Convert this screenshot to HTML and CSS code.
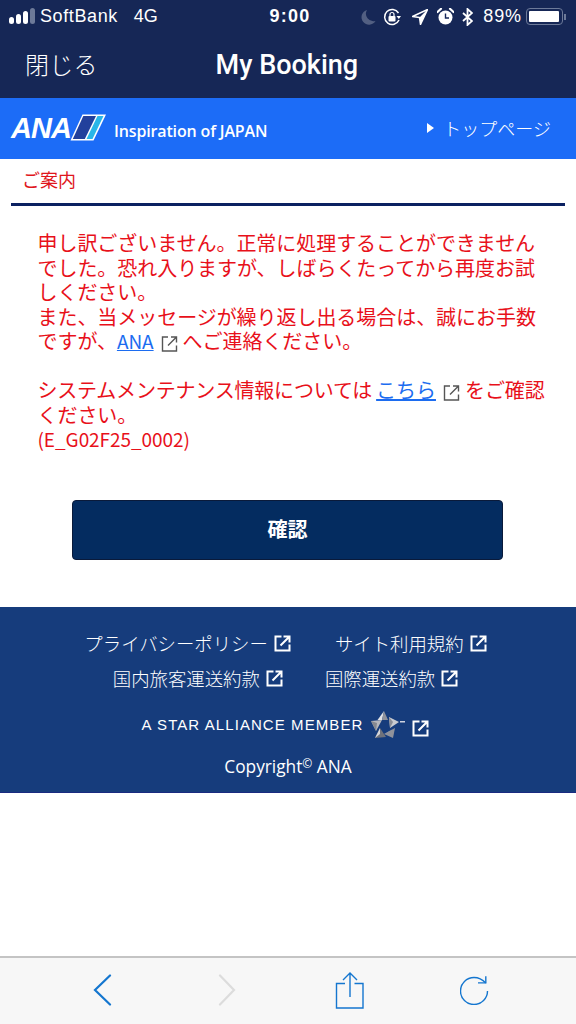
FILE: index.html
```html
<!DOCTYPE html>
<html lang="ja">
<head>
<meta charset="utf-8">
<title>My Booking</title>
<link rel="stylesheet" href="styles.css">
</head>
<body>
<div class="page">
  <header class="topbar">
    <div class="status">
      <div class="status-left">
        <svg class="signal" width="27" height="17" viewBox="0 0 27 17"><rect x="0" y="9" width="5" height="7" rx="2.5" fill="#fff"/><rect x="7" y="6" width="5" height="10" rx="2.5" fill="#fff"/><rect x="14" y="3" width="5" height="13" rx="2.5" fill="#fff"/><rect x="21" y="0" width="5" height="16" rx="2.5" fill="#6d7a99"/></svg>
        <span class="carrier">SoftBank</span><span class="net">4G</span>
      </div>
      <div class="clock">9:00</div>
      <div class="status-right">
        <svg class="st-moon" width="15" height="16" viewBox="0 0 15 16"><path d="M6 1a7.500 7.500 0 1 0 8.500 11A7.500 7.500 0 0 1 6 1z" fill="#525f82"/></svg>
        <svg class="st-lock" width="19" height="18" viewBox="0 0 19 18"><path d="M15.500 5A7.500 7.500 0 1 0 16 12" fill="none" stroke="#fff" stroke-width="1.500"/><path d="M13.500 8l4.500 0-2.200 3z" fill="#fff"/><rect x="5.500" y="8" width="7" height="5.500" rx="1" fill="#fff"/><path d="M7 8V6.500a2 2 0 0 1 4 0V8" fill="none" stroke="#fff" stroke-width="1.200"/></svg>
        <svg class="st-loc" width="16" height="16" viewBox="0 0 16 16"><path d="M15.500 .5L.5 7.500l7 1 1 7z" fill="none" stroke="#fff" stroke-width="1.500" stroke-linejoin="round"/><path d="M15.500 .5L7.500 8.500l1 7z" fill="#fff"/></svg>
        <svg class="st-alarm" width="17" height="17" viewBox="0 0 17 17"><circle cx="8.500" cy="9.500" r="7" fill="#fff"/><path d="M8.500 5.500v4.500h3.500" fill="none" stroke="#16275a" stroke-width="1.400"/><path d="M.5 4L4 .8M16.500 4L13 .8" stroke="#fff" stroke-width="2.200" stroke-linecap="round"/></svg>
        <svg class="st-bt" width="11" height="18" viewBox="0 0 11 18"><path d="M1 5l9 8-4.500 4V1L10 5l-9 8" fill="none" stroke="#fff" stroke-width="1.800"/></svg>
        <span class="pct">89%</span>
        <span class="battery"><span class="battery-fill"></span></span>
        <span class="battery-tip"></span>
      </div>
    </div>
    <div class="navrow">
      <span class="close">閉じる</span>
      <span class="title">My Booking</span>
    </div>
  </header>

  <div class="brand">
    <div class="brand-left">
      <span class="ana-logo">ANA</span>
      <svg class="ana-mark" width="37" height="27" viewBox="0 0 37 27"><path d="M12.500 .5h23.500L23.500 26.500H.5z" fill="#fff"/><path d="M13.300 2h12.700L14.800 25H2.800z" fill="#22409c"/><path d="M27.500 2h6L22.500 25h-6z" fill="#29b6e8"/></svg>
      <span class="tagline">Inspiration of JAPAN</span>
    </div>
    <a class="toplink"><span class="tri"></span>トップページ</a>
  </div>

  <main>
    <h2 class="heading">ご案内</h2>
    <div class="message">
      <p>申し訳ございません。正常に処理することができません<br>でした。恐れ入りますが、しばらくたってから再度お試<br>しください。<br>また、当メッセージが繰り返し出る場合は、誠にお手数<br>ですが、<a class="link latin">ANA</a><svg class="ext-gray" width="17" height="17" viewBox="0 0 17 17"><path d="M7 2H1.500v14h14v-5.500" fill="none" stroke="#555" stroke-width="1.400"/><path d="M7 10.500L15 2.500M10 2h5.500v5.500" fill="none" stroke="#555" stroke-width="1.400"/></svg>へご連絡ください。</p>
      <p><span class="tight">システムメンテナンス情報については</span><a class="link link-after">こちら</a><svg class="ext-gray" width="17" height="17" viewBox="0 0 17 17"><path d="M7 2H1.500v14h14v-5.500" fill="none" stroke="#555" stroke-width="1.400"/><path d="M7 10.500L15 2.500M10 2h5.500v5.500" fill="none" stroke="#555" stroke-width="1.400"/></svg>をご確認<br>ください。<br><span class="latin">(E_G02F25_0002)</span></p>
    </div>
    <div class="actions"><button class="confirm">確認</button></div>
  </main>

  <footer class="footer">
    <div class="frow row1">
      <span class="flink">プライバシーポリシー<svg class="ext" width="17" height="17" viewBox="0 0 17 17"><path d="M7.500 1.500H1.500v14h14v-6" fill="none" stroke="#fff" stroke-width="2"/><path d="M6.500 10.500L15 2M9.500 1.500h6v6" fill="none" stroke="#fff" stroke-width="2"/></svg></span>
      <span class="flink">サイト利用規約<svg class="ext" width="17" height="17" viewBox="0 0 17 17"><path d="M7.500 1.500H1.500v14h14v-6" fill="none" stroke="#fff" stroke-width="2"/><path d="M6.500 10.500L15 2M9.500 1.500h6v6" fill="none" stroke="#fff" stroke-width="2"/></svg></span>
    </div>
    <div class="frow row2">
      <span class="flink">国内旅客運送約款<svg class="ext" width="17" height="17" viewBox="0 0 17 17"><path d="M7.500 1.500H1.500v14h14v-6" fill="none" stroke="#fff" stroke-width="2"/><path d="M6.500 10.500L15 2M9.500 1.500h6v6" fill="none" stroke="#fff" stroke-width="2"/></svg></span>
      <span class="flink">国際運送約款<svg class="ext" width="17" height="17" viewBox="0 0 17 17"><path d="M7.500 1.500H1.500v14h14v-6" fill="none" stroke="#fff" stroke-width="2"/><path d="M6.500 10.500L15 2M9.500 1.500h6v6" fill="none" stroke="#fff" stroke-width="2"/></svg></span>
    </div>
    <div class="star-row">
      <span class="star-text">A STAR ALLIANCE MEMBER</span>
      <svg class="star" width="36" height="30" viewBox="0 0 36 30"><path d="M14 2L7.500 11H12z" fill="#e2e3e6"/><path d="M14 2l-2 9h6z" fill="#8f929b"/><path d="M19 8l10 5-9 6z" fill="#c9cbd0"/><path d="M19 8l1 11 3-6z" fill="#8b8e96"/><path d="M25 19l-2 10-9-4z" fill="#8f929b"/><path d="M25 19l-7 4-4 2z" fill="#d8d9dd"/><path d="M10 19l6 9-11 1z" fill="#6f727b"/><path d="M10 19l-5 10 5-4z" fill="#d5d6da"/><path d="M1 12l11-1-6 11z" fill="#b5b7bd"/><path d="M1 12l5 10 1-8z" fill="#85888f"/><rect x="30" y="12" width="5" height="1.500" fill="#cfd3e0"/></svg>
      <svg class="ext star-ext" width="17" height="17" viewBox="0 0 17 17"><path d="M7.500 1.500H1.500v14h14v-6" fill="none" stroke="#fff" stroke-width="2"/><path d="M6.500 10.500L15 2M9.500 1.500h6v6" fill="none" stroke="#fff" stroke-width="2"/></svg>
    </div>
    <div class="copy">Copyright<sup>©</sup> ANA</div>
  </footer>

  <div class="spacer"></div>

  <nav class="toolbar">
    <svg class="tb-back" width="20" height="32" viewBox="0 0 20 32"><path d="M17 1.500L2 16l15 14.500" fill="none" stroke="#1476cf" stroke-width="2.200" stroke-linecap="round"/></svg>
    <svg width="20" height="32" viewBox="0 0 20 32"><path d="M3 1.500L17 16 3 30.500" fill="none" stroke="#dcdcdc" stroke-width="2.200" stroke-linecap="round"/></svg>
    <svg width="30" height="37" viewBox="0 0 30 37"><path d="M10 11.500H1.500v24.500h26.500V11.500h-8.500M15 25V1M8 8l7-7 7 7" fill="none" stroke="#1476cf" stroke-width="1.400"/></svg>
    <svg class="tb-reload" width="29" height="30" viewBox="0 0 29 30"><path d="M27.500 16A13.500 13.500 0 1 1 14 2.500C18 2.500 22 4 25.800 7.900" fill="none" stroke="#1476cf" stroke-width="1.400"/><path d="M25.800 1.300V7.900H18" fill="none" stroke="#1476cf" stroke-width="1.400"/></svg>
  </nav>
</div>
</body>
</html>
```
FILE: styles.css
```css
* { box-sizing: border-box; }
html, body { margin: 0; padding: 0; }
body {
  width: 576px;
  height: 1024px;
  overflow: hidden;
  background: #fff;
  font-family: "Noto Sans CJK JP", "Noto Sans", sans-serif;
}
.page { display: flex; flex-direction: column; height: 1024px; }

.topbar { background: #162756; height: 98px; color: #fff; }
.status {
  height: 33px;
  padding: 0 10px 0 9px;
  display: flex;
  align-items: center;
  justify-content: space-between;
  position: relative;
  font-family: "Liberation Sans", sans-serif;
  font-size: 18px;
}
.status-left { display: flex; align-items: center; }
.signal { margin-right: 4px; }
.carrier { letter-spacing: .6px; }
.net { margin-left: 16px; }
.clock {
  position: absolute;
  left: 0;
  right: 0;
  top: 6px;
  padding-left: 4px;
  text-align: center;
  font-size: 18px;
  font-weight: 700;
  letter-spacing: 1.2px;
}
.status-right { display: flex; align-items: center; }
.st-moon { margin-right: 7px; }
.st-lock { margin-right: 10px; }
.st-loc { margin-right: 9px; }
.st-alarm { margin-right: 8px; }
.st-bt { margin-right: 10px; }
.pct { letter-spacing: .9px; margin-right: 4px; }
.battery {
  width: 37px;
  height: 17px;
  border: 1px solid #6d7a99;
  border-radius: 4px;
  padding: 2px;
  display: block;
}
.battery-fill { display: block; width: 30px; height: 11px; background: #fff; border-radius: 1px; }
.battery-tip { width: 2px; height: 6px; background: #6d7a99; margin-left: 1px; }

.navrow {
  height: 65px;
  padding: 0 0 0 25px;
  display: flex;
  align-items: center;
}
.close { font-size: 24px; font-weight: 300; letter-spacing: .2px; margin-bottom: 4px; }
.title {
  font-family: "Roboto", "Liberation Sans", sans-serif;
  font-size: 27px;
  font-weight: 500;
  margin-left: 118px;
  margin-bottom: 1px;
}

.brand {
  height: 61px;
  background: #1c6cf7;
  display: flex;
  align-items: center;
  justify-content: space-between;
  padding: 0 25px 0 11px;
  color: #fff;
}
.brand-left { display: flex; align-items: center; }
.ana-logo {
  font-family: "Liberation Sans", sans-serif;
  font-style: italic;
  font-weight: 700;
  font-size: 29px;
  letter-spacing: -1px;
  width: 59px;
}
.ana-mark { margin-top: -3px; }
.tagline {
  font-family: "Open Sans", sans-serif;
  font-size: 16px;
  font-weight: 600;
  margin: 4px 0 0 7px;
  letter-spacing: -.15px;
}
.toplink { font-size: 18px; font-weight: 300; display: flex; align-items: center; margin-top: -1px; }
.tri {
  width: 0;
  height: 0;
  border-left: 7px solid #fff;
  border-top: 5px solid transparent;
  border-bottom: 5px solid transparent;
  margin-right: 9px;
}

.heading {
  margin: 0 11px;
  padding: 8px 0 0 11px;
  height: 47px;
  border-bottom: 3px solid #0b2161;
  color: #e0161c;
  font-size: 18px;
  font-weight: 400;
  line-height: 24px;
}
.message {
  padding: 25px 30px 0 37.500px;
  color: #e8101a;
  font-size: 20px;
  line-height: 24.500px;
  font-weight: 400;
  letter-spacing: -.05px;
}
.message p { margin: 0 0 24.500px; white-space: nowrap; }
.tight { letter-spacing: -.2px; }
.latin { font-size: 19px; }
.link { color: #1c6cf0; text-decoration: underline; }
.link-after { margin-left: 4px; }
.ext-gray { margin: 0 5px 0 7px; vertical-align: -3px; }
.actions { padding: 24px 0 0 72px; }
.confirm {
  display: block;
  width: 431px;
  height: 60px;
  background: #042c60;
  border: 1px solid #0a1a3a;
  border-radius: 4px;
  color: #fff;
  font-family: inherit;
  font-size: 20px;
  font-weight: 700;
  padding: 0 0 4px;
}

.footer {
  margin-top: 47px;
  height: 186px;
  background: #163c7c;
  border-bottom: 1px solid #1a2a80;
  color: #fff;
  font-size: 18.400px;
  font-weight: 300;
}
.frow { display: flex; justify-content: center; padding-right: 5px; }
.flink { display: flex; align-items: center; line-height: 26px; }
.ext { margin-left: 6px; }
.row1 { padding-top: 23px; gap: 44px; }
.row2 { padding-top: 9px; gap: 42px; }
.star-row { display: flex; justify-content: center; align-items: center; padding: 19px 5px 0 0; height: 47px; }
.star-text {
  font-family: "Liberation Sans", sans-serif;
  font-size: 15px;
  letter-spacing: 1.080px;
}
.star { margin-left: 7px; }
.star-ext { margin: 8px 0 0 6px; }
.copy {
  text-align: center;
  font-family: "Open Sans", sans-serif;
  font-size: 17.300px;
  font-weight: 400;
  padding-top: 17px;
  line-height: 24px;
}
.copy sup { font-size: 12px; line-height: 0; vertical-align: 5px; }

.spacer { flex: 1; }
.toolbar {
  height: 68px;
  background: #f7f7f7;
  border-top: 2px solid #c4c4c4;
  display: flex;
  align-items: center;
  padding: 0 0 2px 93px;
  gap: 98px;
}
.tb-back { margin-right: 6px; }
.tb-reload { margin-left: -3px; }
```
